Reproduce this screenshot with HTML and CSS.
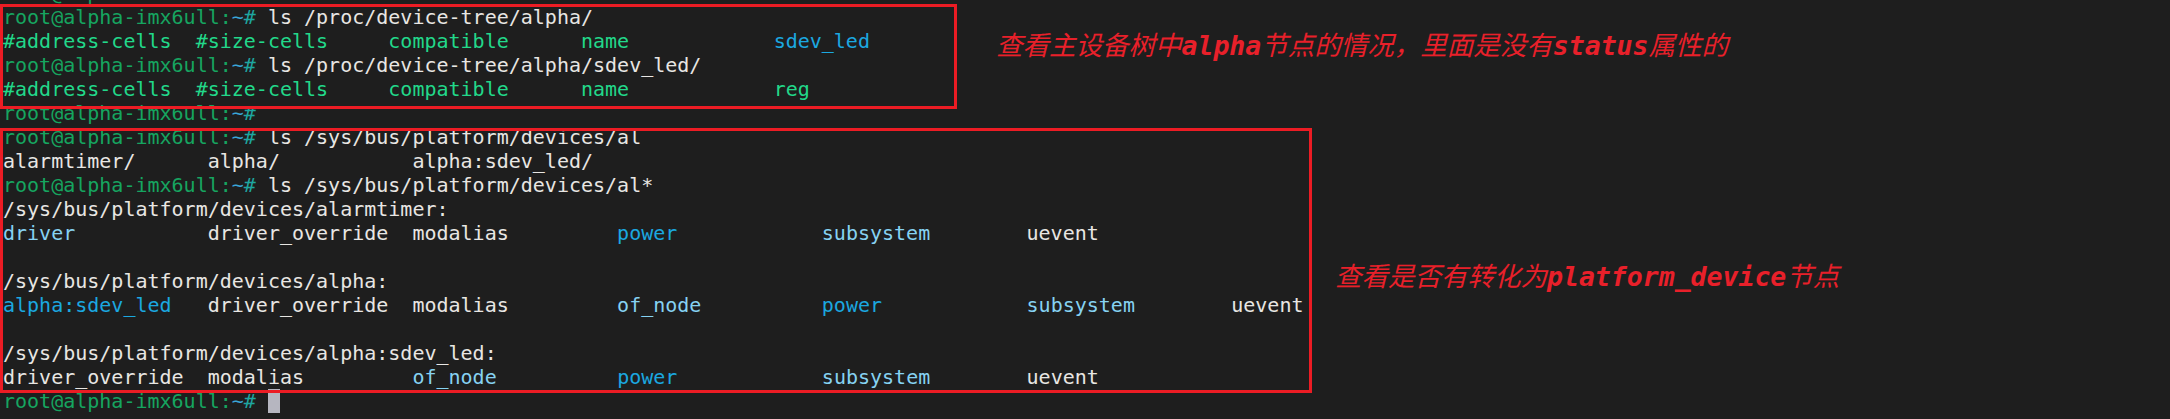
FILE: index.html
```html
<!DOCTYPE html>
<html lang="zh">
<head>
<meta charset="utf-8">
<title>terminal</title>
<link rel="stylesheet" href="styles.css">
</head>
<body>
<div class="screen">
<pre class="term"><span class="pg">root@alpha-imx6ull:</span><span class="pt">~</span><span class="ph">#</span> 
<span class="pg">root@alpha-imx6ull:</span><span class="pt">~</span><span class="ph">#</span> ls /proc/device-tree/alpha/
<span class="fg">#address-cells  #size-cells     compatible      name            </span><span class="dir">sdev_led</span>
<span class="pg">root@alpha-imx6ull:</span><span class="pt">~</span><span class="ph">#</span> ls /proc/device-tree/alpha/sdev_led/
<span class="fg">#address-cells  #size-cells     compatible      name            reg</span>
<span class="pg">root@alpha-imx6ull:</span><span class="pt">~</span><span class="ph">#</span>
<span class="pg">root@alpha-imx6ull:</span><span class="pt">~</span><span class="ph">#</span> ls /sys/bus/platform/devices/al
alarmtimer/      alpha/           alpha:sdev_led/
<span class="pg">root@alpha-imx6ull:</span><span class="pt">~</span><span class="ph">#</span> ls /sys/bus/platform/devices/al*
/sys/bus/platform/devices/alarmtimer:
<span class="lnk">driver</span>           driver_override  modalias         <span class="dir">power</span>            <span class="lnk">subsystem</span>        uevent

/sys/bus/platform/devices/alpha:
<span class="dir">alpha:sdev_led</span>   driver_override  modalias         <span class="lnk">of_node</span>          <span class="dir">power</span>            <span class="lnk">subsystem</span>        uevent

/sys/bus/platform/devices/alpha:sdev_led:
driver_override  modalias         <span class="lnk">of_node</span>          <span class="dir">power</span>            <span class="lnk">subsystem</span>        uevent
<span class="pg">root@alpha-imx6ull:</span><span class="pt">~</span><span class="ph">#</span> <span class="cursor"></span></pre>
<div class="mark mark-a"></div>
<div class="mark mark-b"></div>
<p class="note note-a">查看主设备树中<b>alpha</b>节点的情况，里面是没有<b>status</b>属性的</p>
<p class="note note-b">查看是否有转化为<b>platform_device</b>节点</p>
</div>
</body>
</html>
```
FILE: styles.css
```css
html, body {
  margin: 0;
  padding: 0;
  background: #1e1e1e;
  overflow: hidden;
}

.screen {
  position: relative;
  width: 2170px;
  height: 419px;
  overflow: hidden;
  background: #1e1e1e;
}

.term {
  margin: -19px 0 0 0;
  padding: 0 0 0 3px;
  font-family: "DejaVu Sans Mono", "Liberation Mono", monospace;
  font-size: 20px;
  line-height: 24px;
  color: #e8e6e3;
  white-space: pre;
}

.pg { color: #16a560; }
.pt { color: #3aa6d8; }
.ph { color: #1ea5a0; }
.fg { color: #22d88a; }
.dir { color: #1ba8e0; }
.lnk { color: #86d2f2; }

.cursor {
  display: inline-block;
  width: 12px;
  height: 24px;
  vertical-align: top;
  background: #b6b6c0;
}

.mark {
  position: absolute;
  left: 0;
  box-sizing: border-box;
  border: 3px solid #ec1c24;
}

.mark-a {
  top: 4px;
  width: 957px;
  height: 105px;
}

.mark-b {
  top: 128px;
  width: 1312px;
  height: 265px;
}

.note {
  position: absolute;
  margin: 0;
  font-family: "Noto Sans CJK SC", "DejaVu Sans Mono", sans-serif;
  font-size: 26.5px;
  line-height: 30px;
  font-style: italic;
  color: #e8202a;
  white-space: nowrap;
}

.note b {
  font-family: "DejaVu Sans Mono", "Noto Sans CJK SC", monospace;
  font-weight: bold;
}

.note-a {
  left: 996px;
  top: 29px;
}

.note-b {
  left: 1335px;
  top: 260px;
}
```
